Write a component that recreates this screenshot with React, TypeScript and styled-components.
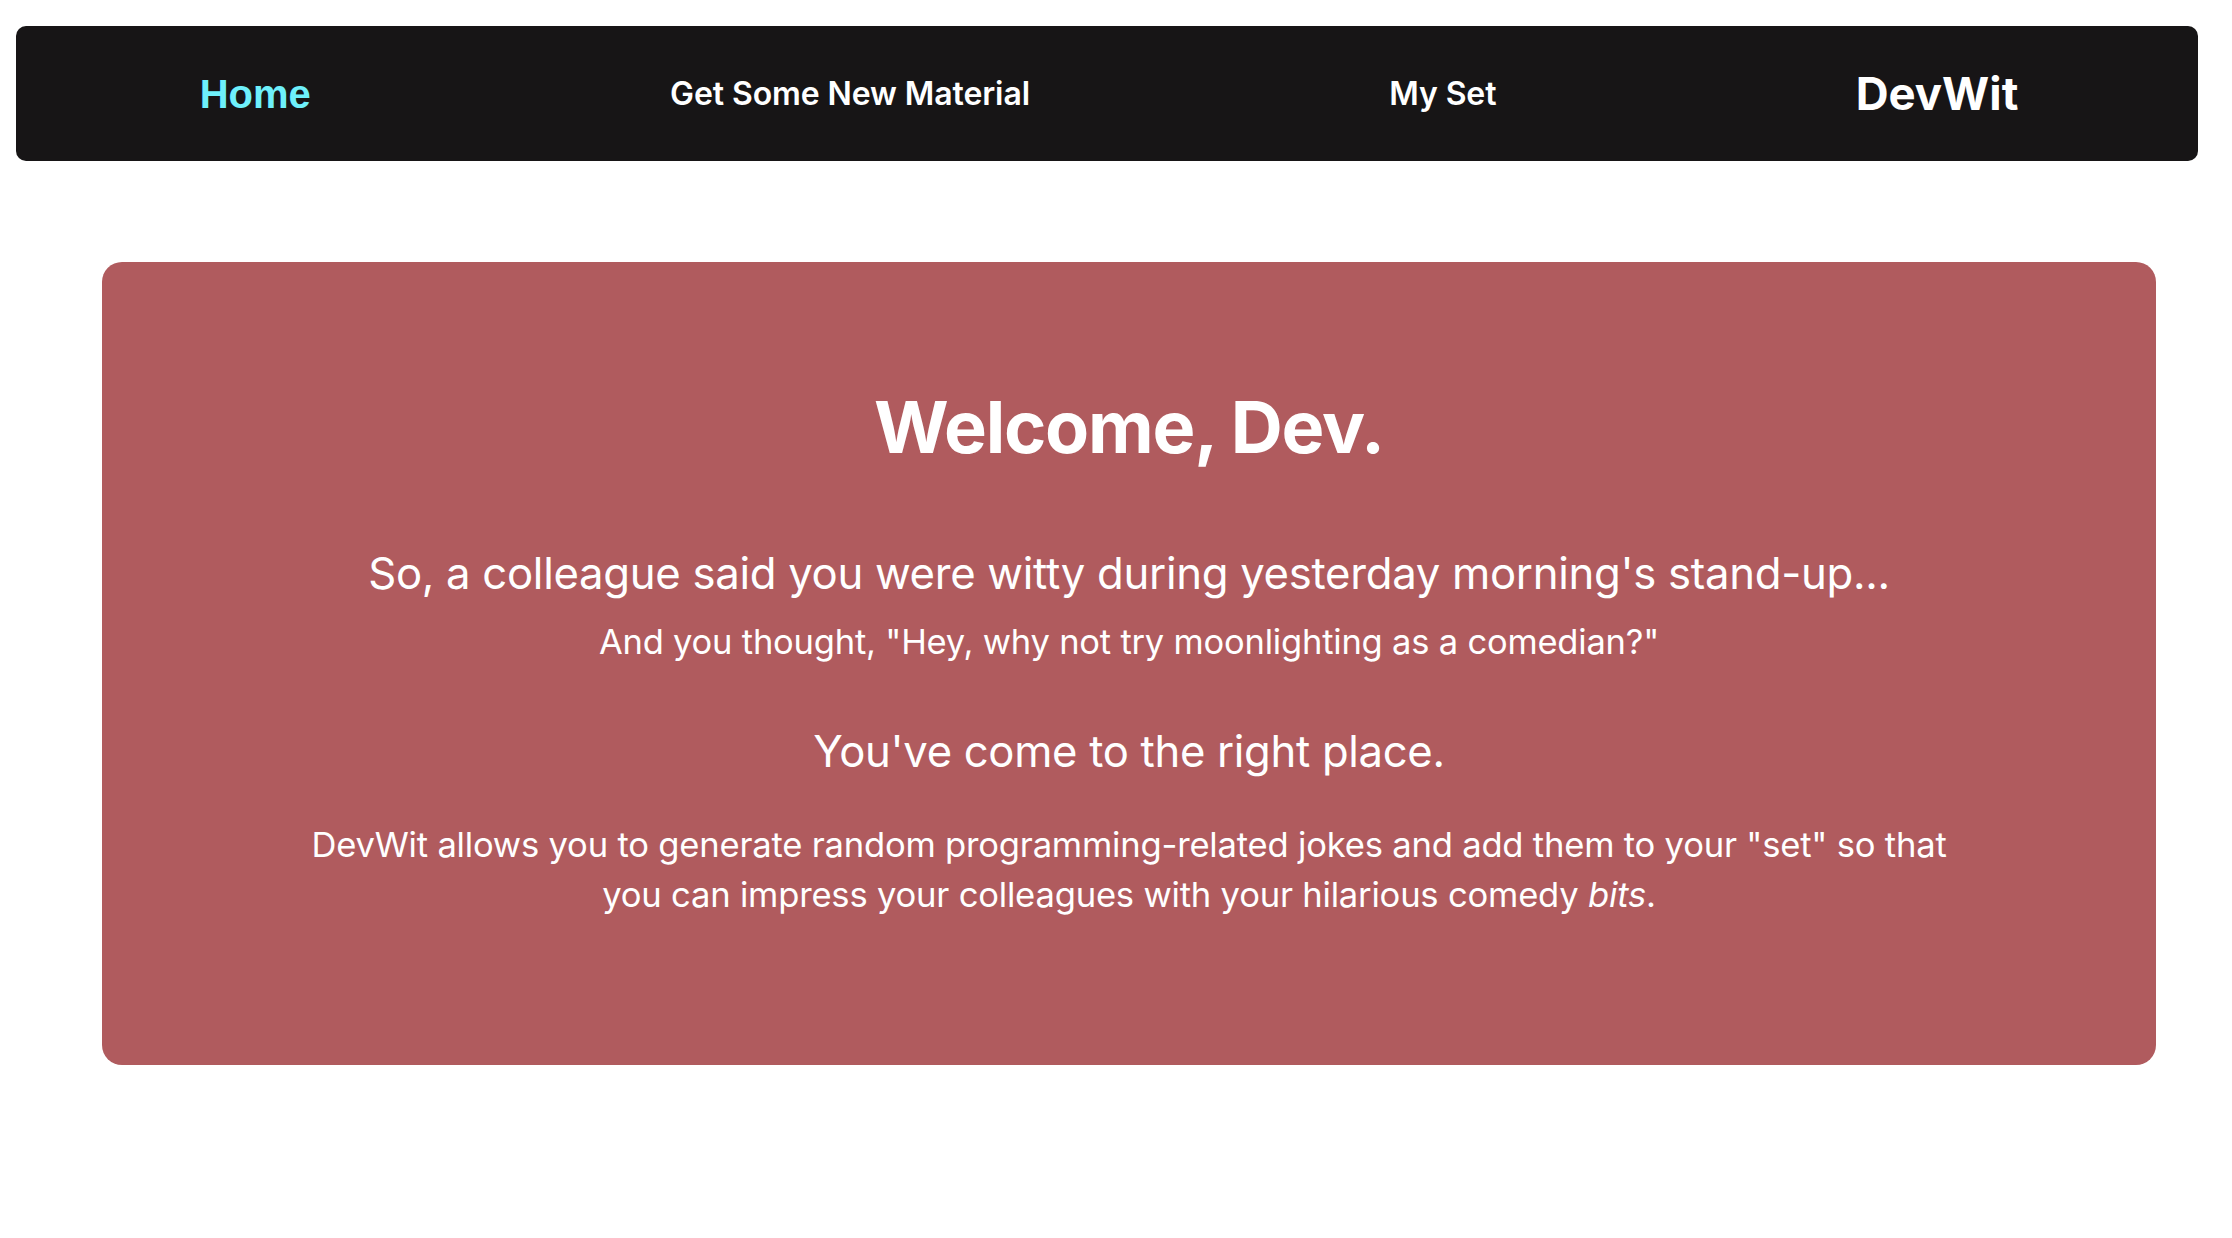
import React from "react";
import styled, { createGlobalStyle } from "styled-components";

const GlobalStyle = createGlobalStyle`
  html, body {
    margin: 0;
    padding: 0;
    background: #ffffff;
  }
  body {
    padding: 26px 0 0 0;
    font-family: Inter, "Noto Sans", sans-serif;
  }
`;

const NavBar = styled.nav`
  display: flex;
  align-items: center;
  justify-content: space-around;
  height: 135px;
  margin: 0 34px 0 16px;
  padding-left: 4px;
  background: #171516;
  border-radius: 10px;
`;

const NavLink = styled.a<{ $active?: boolean }>`
  font-family: ${(p) => (p.$active ? '"Liberation Sans", Arial, sans-serif' : 'Inter, "Noto Sans", sans-serif')};
  font-size: ${(p) => (p.$active ? "40px" : "32px")};
  font-weight: ${(p) => (p.$active ? 700 : 600)};
  color: ${(p) => (p.$active ? "#6ef0fb" : "#ffffff")};
  text-decoration: none;
  letter-spacing: ${(p) => (p.$active ? "0" : "-0.1px")};
  margin-top: ${(p) => (p.$active ? "2px" : "0")};
`;

const Brand = styled.span`
  font-family: Inter, "Noto Sans", sans-serif;
  font-size: 45.5px;
  font-weight: 700;
  color: #ffffff;
  letter-spacing: 0;
`;

const Card = styled.main`
  display: flex;
  flex-direction: column;
  align-items: center;
  margin: 101px 76px 0 102px;
  height: 803px;
  box-sizing: border-box;
  padding-top: 121px;
  background: #b05b5e;
  border-radius: 20px;
  color: #ffffff;
  text-align: center;
`;

const Title = styled.h1`
  margin: 0;
  font-size: 72px;
  font-weight: 700;
  line-height: 88px;
  letter-spacing: -1.2px;
`;

const Lead = styled.p`
  margin: 73px 0 0 0;
  font-size: 43.7px;
  font-weight: 400;
  line-height: 60px;
  letter-spacing: -0.3px;
`;

const SubLead = styled.p`
  margin: 14px 0 0 0;
  font-size: 34.5px;
  font-weight: 400;
  line-height: 48px;
  letter-spacing: -0.2px;
`;

const Highlight = styled.h2`
  margin: 56px 0 0 0;
  font-size: 43.6px;
  font-weight: 400;
  line-height: 60px;
  letter-spacing: -0.3px;
`;

const Body = styled.p`
  margin: 37px 0 0 0;
  max-width: 1700px;
  font-size: 34.6px;
  font-weight: 400;
  line-height: 50px;
  letter-spacing: -0.2px;
`;

export default function App() {
  return (
    <>
      <GlobalStyle />
      <NavBar>
        <NavLink $active href="#">Home</NavLink>
        <NavLink href="#">Get Some New Material</NavLink>
        <NavLink href="#">My Set</NavLink>
        <Brand>DevWit</Brand>
      </NavBar>
      <Card>
        <Title>Welcome, Dev.</Title>
        <Lead>So, a colleague said you were witty during yesterday morning's stand-up...</Lead>
        <SubLead>And you thought, "Hey, why not try moonlighting as a comedian?"</SubLead>
        <Highlight>You've come to the right place.</Highlight>
        <Body>
          DevWit allows you to generate random programming-related jokes and add them to your "set" so that
          <br />
          you can impress your colleagues with your hilarious comedy <em>bits</em>.
        </Body>
      </Card>
    </>
  );
}
